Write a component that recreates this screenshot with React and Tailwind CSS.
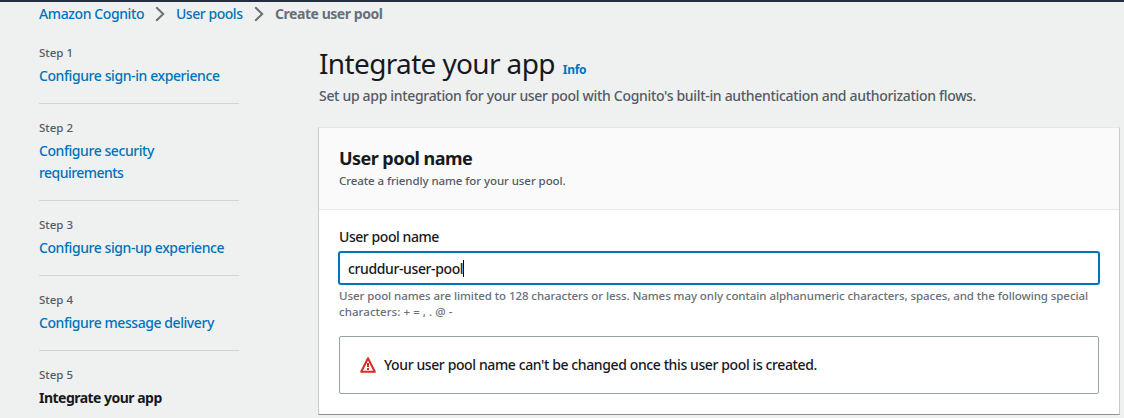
const steps = [
  { n: 1, lines: [['Configure sign-in experience', 'tracking-[-0.41px]']] },
  { n: 2, lines: [['Configure security', 'tracking-[-0.43px]'], ['requirements', 'tracking-[-0.55px]']] },
  { n: 3, lines: [['Configure sign-up experience', 'tracking-[-0.42px]']] },
  { n: 4, lines: [['Configure message delivery', 'tracking-[-0.43px]']] },
  { n: 5, lines: [['Integrate your app', 'tracking-[-0.52px]']], current: true },
];

function Chevron() {
  return (
    <svg className="h-4 w-[10px] shrink-0" viewBox="0 0 10 16" fill="none" stroke="#687078" strokeWidth="2">
      <path d="M1.2 1.2 8.2 8 1.2 14.8" />
    </svg>
  );
}

function WarningIcon() {
  return (
    <svg className="size-4 shrink-0" viewBox="0 0 16 16" fill="none" stroke="#d92d20" strokeWidth="2">
      <path d="M8 1.2 14.8 14.8H1.2Z" strokeLinejoin="round" />
      <path d="M8 6v4M8 11v2" />
    </svg>
  );
}

export default function App() {
  return (
    <div className="flex h-[418px] w-[1124px] flex-col overflow-hidden border-t-2 border-[#232f3e] bg-[#eff1f1] font-['Noto_Sans',sans-serif] text-sm font-medium text-[#16191f]">
      <nav className="flex h-[23px] shrink-0 items-center pl-[39px] leading-[22px] whitespace-nowrap">
        <a className="w-[116px] tracking-[-0.4px] text-[#0073bb]">Amazon Cognito</a>
        <Chevron />
        <a className="ml-[11px] w-[78px] tracking-[-0.46px] text-[#0073bb]">User pools</a>
        <Chevron />
        <span className="ml-[11px] font-bold tracking-[-0.45px] text-[#687078]">Create user pool</span>
      </nav>
      <div className="flex min-h-0 flex-1">
        <ul className="ml-[39px] w-[200px] shrink-0 pt-1">
          {steps.map((s) => (
            <li key={s.n} className="border-b border-[#d0d5d5] py-4">
              <div className="text-[11.5px] leading-4 text-[#545b64]">Step {s.n}</div>
              <div className={s.current ? 'mt-1 leading-[22px] font-bold' : 'mt-1 leading-[22px] text-[#0073bb]'}>
                {s.lines.map(([text, cls]) => (
                  <div key={text} className={cls + ' whitespace-nowrap'}>{text}</div>
                ))}
              </div>
            </li>
          ))}
        </ul>
        <main className="ml-[79px] w-[802px] shrink-0 whitespace-nowrap">
          <div className="flex items-baseline pt-5 pl-px">
            <h1 className="text-[28px] leading-9 font-normal tracking-[-0.64px]">Integrate your app</h1>
            <a className="ml-2 text-xs font-bold tracking-[-0.3px] text-[#0073bb]">Info</a>
          </div>
          <p className="mt-[4px] pl-px leading-[22px] tracking-[-0.32px] text-[#545b64]">
            Set up app integration for your user pool with Cognito&apos;s built-in authentication and authorization flows.
          </p>
          <section className="mt-5 h-[288px] border border-t-[#e4e8e8] border-r-[#c8cccc] border-b-[#879596] border-l-[#c8cccc] bg-white">
            <header className="h-[82px] border-b border-[#e4e8e8] bg-[#fafafa] pt-[19px] pl-5">
              <h2 className="text-lg leading-[22px] font-bold tracking-[-0.55px]">User pool name</h2>
              <p className="mt-1 text-[11.5px] leading-4 tracking-[-0.08px] text-[#545b64]">Create a friendly name for your user pool.</p>
            </header>
            <div className="px-5 pt-4">
              <label className="block leading-[22px] tracking-[-0.44px]">User pool name</label>
              <div className="-mx-px mt-[3px] flex h-[34px] items-center rounded-[3px] border-2 border-[#0073bb] pt-px pl-2">
                <span className="tracking-[-0.38px]">cruddur-user-pool</span>
                <span className="h-[17px] w-px bg-black" />
              </div>
              <div className="mt-[3px] text-[11.5px] leading-4 tracking-[-0.075px] text-[#687078]">
                <p>User pool names are limited to 128 characters or less. Names may only contain alphanumeric characters, spaces, and the following special</p>
                <p className="tracking-[0.05px]">characters: + = , . @ -</p>
              </div>
              <div className="mt-4 flex h-[58px] items-center rounded-[2px] border border-[#95a5a6] pl-5">
                <WarningIcon />
                <span className="ml-2 tracking-[-0.39px]">Your user pool name can&apos;t be changed once this user pool is created.</span>
              </div>
            </div>
          </section>
        </main>
      </div>
    </div>
  );
}
